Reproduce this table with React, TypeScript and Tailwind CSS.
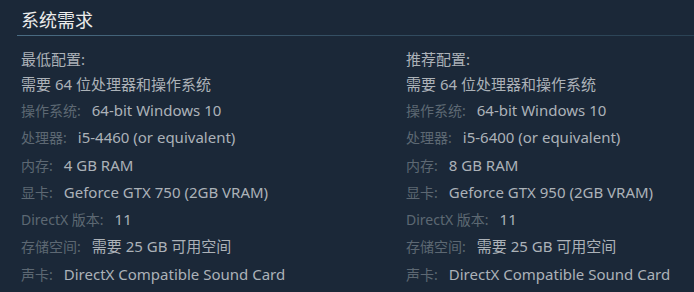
export default function App() {
  const minimum = [
    { label: "操作系统:", value: "64-bit Windows 10" },
    { label: "处理器:", value: "i5-4460 (or equivalent)" },
    { label: "内存:", value: "4 GB RAM" },
    { label: "显卡:", value: "Geforce GTX 750 (2GB VRAM)" },
    { label: "DirectX 版本:", value: "11" },
    { label: "存储空间:", value: "需要 25 GB 可用空间" },
    { label: "声卡:", value: "DirectX Compatible Sound Card" },
  ];
  const recommended = [
    { label: "操作系统:", value: "64-bit Windows 10" },
    { label: "处理器:", value: "i5-6400 (or equivalent)" },
    { label: "内存:", value: "8 GB RAM" },
    { label: "显卡:", value: "Geforce GTX 950 (2GB VRAM)" },
    { label: "DirectX 版本:", value: "11" },
    { label: "存储空间:", value: "需要 25 GB 可用空间" },
    { label: "声卡:", value: "DirectX Compatible Sound Card" },
  ];

  return (
    <div
      className="w-[694px] h-[292px] overflow-hidden bg-[#1b2838]"
      style={{ fontFamily: '"Noto Sans", "Noto Sans CJK SC", sans-serif' }}
    >
      {/* Header */}
      <div className="pl-[17px] pt-[6px]">
        <h2 className="pl-[4px] text-[18px] leading-[28px] text-[#ececec]">系统需求</h2>
        <div className="mt-[1px] h-px bg-linear-to-r from-[#4a6c83] via-[#334d61] to-[#2b4355]" />
      </div>

      {/* Columns */}
      <div className="flex pl-[21px] pt-[11px]">
        <ReqColumn title="最低配置:" items={minimum} />
        <ReqColumn title="推荐配置:" items={recommended} />
      </div>
    </div>
  );
}

function ReqColumn({
  title,
  items,
}: {
  title: string;
  items: { label: string; value: string }[];
}) {
  return (
    <div className="w-[385px] shrink-0 text-[15px] text-[#acb2b8]">
      <div className="leading-[25px]">{title}</div>
      <div className="leading-[25px]">需要 64 位处理器和操作系统</div>
      <ul>
        {items.map((item) => (
          <li key={item.label} className="leading-[27.3px] whitespace-nowrap">
            <span className="mr-[11px] text-[14px] text-[#5d6873]">{item.label}</span>
            <span>{item.value}</span>
          </li>
        ))}
      </ul>
    </div>
  );
}
